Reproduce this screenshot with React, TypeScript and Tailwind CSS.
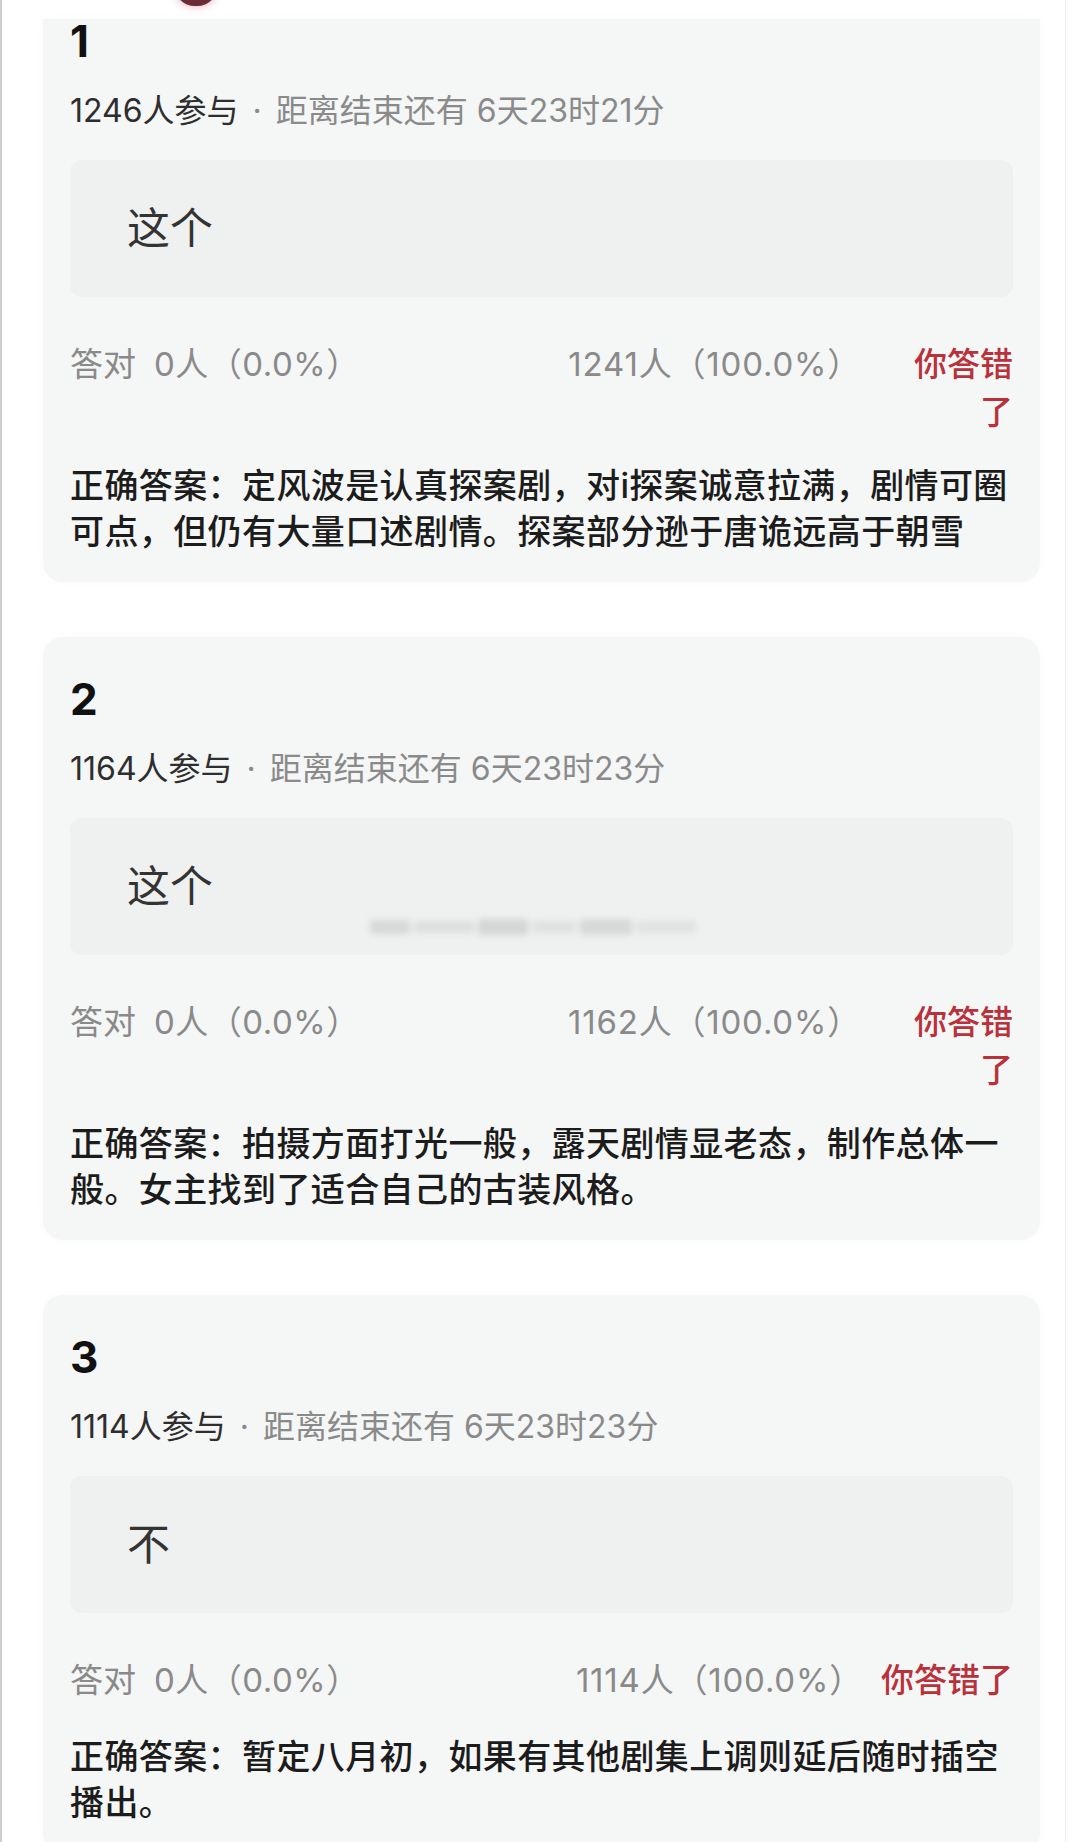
import React from "react";

type Card = {
  n: string;
  joined: string;
  remain: string;
  answer: string;
  right: string;
  wrong: string;
  wrap: boolean;
  text: string;
  blur?: boolean;
};

const cards: Card[] = [
  {
    n: "1",
    joined: "1246",
    remain: "6天23时21分",
    answer: "这个",
    right: "0人（0.0%）",
    wrong: "1241人（100.0%）",
    wrap: true,
    text: "正确答案：定风波是认真探案剧，对i探案诚意拉满，剧情可圈可点，但仍有大量口述剧情。探案部分逊于唐诡远高于朝雪",
  },
  {
    n: "2",
    joined: "1164",
    remain: "6天23时23分",
    answer: "这个",
    right: "0人（0.0%）",
    wrong: "1162人（100.0%）",
    wrap: true,
    blur: true,
    text: "正确答案：拍摄方面打光一般，露天剧情显老态，制作总体一般。女主找到了适合自己的古装风格。",
  },
  {
    n: "3",
    joined: "1114",
    remain: "6天23时23分",
    answer: "不",
    right: "0人（0.0%）",
    wrong: "1114人（100.0%）",
    wrap: false,
    text: "正确答案：暂定八月初，如果有其他剧集上调则延后随时插空播出。",
  },
];

function QuizCard({ c, first }: { c: Card; first: boolean }) {
  return (
    <div
      className={
        "w-[997px] bg-[#f5f6f6] px-[27px] pb-[27px] shadow-[0_0_10px_rgba(0,0,0,0.025)] " +
        (first ? "rounded-b-[20px] pt-0" : "rounded-[20px] pt-[40px] mt-[55px]")
      }
    >
      <div
        className={
          "text-[44px] leading-[44px] font-bold text-[#111111] " +
          (first ? "-mt-[3px]" : "")
        }
      >
        {c.n}
      </div>
      <div className="mt-[26px] text-[32px] leading-[44px] whitespace-nowrap">
        <span className="text-[#2e2e2e]">{c.joined}人参与</span>
        <span className="text-[#8a8a8a] mx-[14px]">·</span>
        <span className="text-[#8a8a8a]">距离结束还有 {c.remain}</span>
      </div>
      <div className="relative mt-[27px] h-[137px] rounded-[12px] bg-[#eff0f0] flex items-center pl-[57px]">
        <span className="text-[43px] text-[#333333]">{c.answer}</span>
        {c.blur && (
          <div className="absolute left-[300px] top-[98px] w-[340px] h-[22px] flex items-center gap-[4px] blur-[3px] opacity-60">
            <div className="h-[14px] w-[40px] bg-[#c8c8c8]" />
            <div className="h-[12px] w-[60px] bg-[#d2d2d2]" />
            <div className="h-[16px] w-[50px] bg-[#c4c4c4]" />
            <div className="h-[12px] w-[44px] bg-[#d6d6d6]" />
            <div className="h-[16px] w-[52px] bg-[#c8c8c8]" />
            <div className="h-[12px] w-[60px] bg-[#d8d8d8]" />
          </div>
        )}
      </div>
      <div className="mt-[43px] flex items-start text-[33px] leading-[48px]">
        <div className="flex-1 text-[#8a8a8a] whitespace-nowrap">
          答对<span className="ml-[18px] tracking-[0.5px]">{c.right}</span>
        </div>
        <div className="text-[#8a8a8a] whitespace-nowrap tracking-[0.8px]">{c.wrong}</div>
        {c.wrap ? (
          <div className="ml-[50px] w-[102px] text-right text-[#b8313b] font-medium">
            你答错了
          </div>
        ) : (
          <div className="ml-[18px] whitespace-nowrap text-[#b8313b] font-medium">
            你答错了
          </div>
        )}
      </div>
      <div
        className={
          "text-[34px] leading-[46px] tracking-[0.4px] text-[#1c1c1c] font-medium " +
          (c.wrap ? "mt-[27px]" : "mt-[30px]")
        }
      >
        {c.text}
      </div>
    </div>
  );
}

export default function App() {
  return (
    <div className="w-[1080px] h-[1842px] overflow-hidden bg-white border-l-2 border-[#cfcfcf] font-['Inter','Noto_Sans_CJK_SC',sans-serif]">
      <div className="w-[1064px] h-full border-r border-[#ededed] pl-[41px]">
        <div className="h-[22px] overflow-hidden">
          <div className="ml-[131px] -mt-[36px] w-[44px] h-[42px] rounded-full bg-[#6b2a35] shadow-[0_0_8px_rgba(200,80,110,0.5)]" />
        </div>
        {cards.map((c, i) => (
          <QuizCard key={c.n} c={c} first={i === 0} />
        ))}
      </div>
    </div>
  );
}
